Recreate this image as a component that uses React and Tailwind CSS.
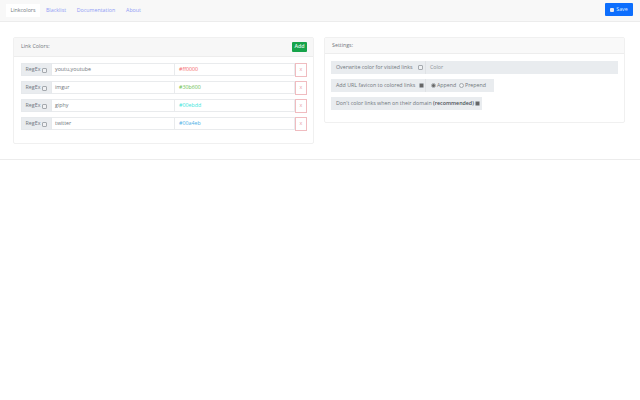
import React from 'react';

const rows = [
  { pattern: 'youtu,youtube', color: '#ff0000', tone: 'text-[#f46a6a]' },
  { pattern: 'imgur', color: '#30b600', tone: 'text-[#6cc14c]' },
  { pattern: 'giphy', color: '#00ebdd', tone: 'text-[#3fe6dc]' },
  { pattern: 'twitter', color: '#00a4eb', tone: 'text-[#4fb0e6]' },
];

const Check = ({ checked }) => (
  <span className="inline-flex w-[5px] h-[5px] border-[0.5px] border-[#a5aaaf] bg-[#f0f1f3] items-center justify-center rounded-[1px] shrink-0">
    {checked && <span className="w-[3px] h-[3px] bg-[#666]" />}
  </span>
);

const Radio = ({ checked }) => (
  <span className="inline-flex w-[5px] h-[5px] rounded-full border-[0.5px] border-[#a5aaaf] bg-[#f0f1f3] items-center justify-center shrink-0">
    {checked && <span className="w-[3px] h-[3px] rounded-full bg-[#666]" />}
  </span>
);

const LinkRow = ({ pattern, color, tone }) => (
  <div className="flex h-[13px]">
    <div className="w-[31px] bg-[#e9ecef] border border-[#e6e9ec] pt-px flex items-center justify-center gap-[2px]">
      RegEx <Check />
    </div>
    <div className="w-[122px] bg-white border-y border-[#e9ebed] pl-[3px] pt-px flex items-center">{pattern}</div>
    <div className={`w-[121px] bg-white border border-[#e9ebed] pl-[4px] pt-px flex items-center ${tone}`}>{color}</div>
    <div className="w-[12px] h-[14px] border-[0.5px] border-[#f0bcc0] flex items-center justify-center text-[#e9a0a6] bg-white">x</div>
  </div>
);

const App = () => {
  return (
    <div className="w-[640px] h-[400px] bg-white overflow-hidden text-[5.3px] leading-none font-['Open_Sans',sans-serif] text-[#70767c]">
      <div className="h-[22px] bg-[#f8f8f8] border-b border-[#ececec] flex items-start justify-between pl-[6px] pr-[7px] pt-[4px]">
        <div className="flex text-[#8f9bf5]">
          <div className="w-[34px] h-[13px] pt-px bg-white flex items-center justify-center text-[#70767c]">Linkcolors</div>
          <div className="w-[32px] h-[13px] pt-px flex items-center justify-center">Blacklist</div>
          <div className="w-[48px] h-[13px] pt-px flex items-center justify-center">Documentation</div>
          <div className="w-[27px] h-[13px] pt-px flex items-center justify-center">About</div>
        </div>
        <button className="h-[13px] w-[28px] mt-[-1px] bg-[#0d6efd] rounded-[1px] text-[#dfeaff] flex items-center justify-center gap-[2px]">
          <span className="w-[4px] h-[4px] bg-[#e6e6ee] rounded-[1px]" /> Save
        </button>
      </div>

      <div className="flex gap-[10px] pl-[13px] pt-[15px] border-b border-[#ececec] h-[138px] items-start">
        <div className="w-[301px] h-[107px] border border-[#f0f0f0] rounded-[2px]">
          <div className="h-[19px] bg-[#f7f7f7] border-b border-[#ededed] flex items-center justify-between pl-[7px] pr-[6px]">
            <span>Link Colors:</span>
            <button className="h-[10px] w-[15px] bg-[#16a34a] rounded-[1px] text-[#e4f5ea] font-semibold">Add</button>
          </div>
          <div className="pl-[7px] pt-[6px] flex flex-col gap-[5px]">
            {rows.map((row) => <LinkRow key={row.pattern} {...row} />)}
          </div>
        </div>

        <div className="w-[301px] h-[86px] border border-[#f0f0f0] rounded-[2px]">
          <div className="h-[16px] pt-px bg-[#f9f9f9] border-b border-[#ededed] flex items-center pl-[7px]">Settings:</div>
          <div className="pl-[6px] pt-[7px] flex flex-col items-start gap-[5px]">
            <div className="w-[287px] h-[13px] bg-[#e9ecef] flex items-center pl-[5px]">
              <span className="w-[82px] shrink-0">Overwrite color for visited links</span>
              <Check />
              <span className="border-l border-[#dfe2e5] ml-[2px] pl-[4px] h-full flex items-center text-[#8c9298]">Color</span>
            </div>
            <div className="w-[163px] h-[13px] bg-[#e9ecef] flex items-center pl-[5px]">
              <span className="w-[83px] shrink-0">Add URL favicon to colored links</span>
              <Check checked />
              <span className="border-l border-[#dfe2e5] ml-[1px] pl-[5px] h-full flex items-center">
                <Radio checked /><span className="ml-[1px] w-[22px]">Append</span><Radio /><span className="ml-[1px]">Prepend</span>
              </span>
            </div>
            <div className="w-[151px] h-[13px] bg-[#e9ecef] flex items-center gap-[1px] pl-[5px]">
              <span>Don't color links when on their domain <b className="font-semibold text-[#4a5056]">(recommended)</b></span>
              <Check checked />
            </div>
          </div>
        </div>
      </div>
    </div>
  );
};

export default App;
